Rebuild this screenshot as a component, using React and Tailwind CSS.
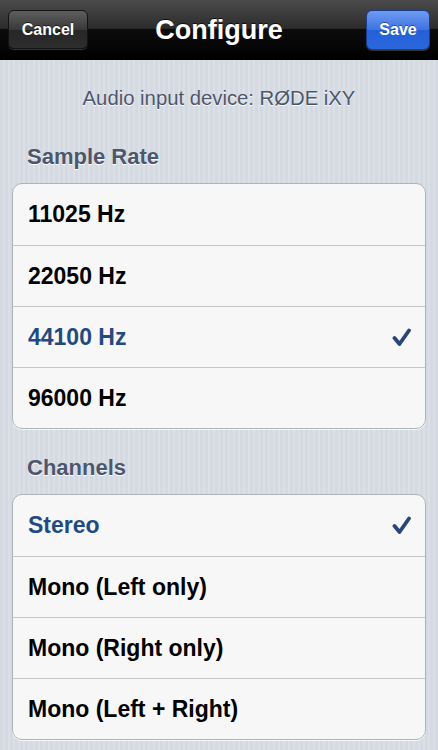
import { useState } from 'react';

const RATES = ['11025 Hz', '22050 Hz', '44100 Hz', '96000 Hz'];
const CHANNELS = ['Stereo', 'Mono (Left only)', 'Mono (Right only)', 'Mono (Left + Right)'];

function Check() {
  return (
    <svg width="19" height="19" viewBox="0 0 19 19" className="shrink-0">
      <path d="M2.5 10 L7.5 16 L17 2.5" fill="none" stroke="#2a4678" strokeWidth="3.8" strokeLinecap="round" strokeLinejoin="round" />
    </svg>
  );
}

function Group({ items, selected, onSelect }) {
  return (
    <div className="rounded-[10px] border border-[#aeb3ba] bg-[#f7f7f7] shadow-[0_1px_0_rgba(255,255,255,0.8)] overflow-hidden">
      {items.map((item, i) => (
        <div
          key={item}
          onClick={() => onSelect(i)}
          className={`flex h-[61px] items-center justify-between pl-[15px] pr-[14px] ${i > 0 ? 'border-t border-[#c6c6c6]' : ''}`}
        >
          <span className={`text-[23px] font-bold ${selected === i ? 'text-[#234a80]' : 'text-black'}`}>{item}</span>
          {selected === i && <Check />}
        </div>
      ))}
    </div>
  );
}

export default function App() {
  const [rate, setRate] = useState(2);
  const [channel, setChannel] = useState(0);

  return (
    <div className="h-[750px] w-[438px] overflow-hidden bg-[repeating-linear-gradient(90deg,#d5dae2_0px,#d5dae2_3px,#dbe0e7_3px,#dbe0e7_5px)] font-['Liberation_Sans',Arial,sans-serif]">
      <div className="relative flex h-[60px] items-center justify-between border-b border-black bg-[linear-gradient(to_bottom,#4b4b4b_0%,#2c2c2c_48%,#0c0c0c_50%,#000_100%)] px-[8px]">
        <button className="h-[39px] w-[80px] rounded-[6px] border border-[#141414] bg-[linear-gradient(to_bottom,#5e5e5e_0%,#3a3a3a_50%,#262626_51%,#2e2e2e_100%)] text-[16px] font-bold text-white shadow-[0_1px_0_rgba(255,255,255,0.18)] [text-shadow:0_-1px_0_rgba(0,0,0,0.6)]">
          Cancel
        </button>
        <h1 className="absolute left-0 right-0 top-[12px] text-center text-[27px] font-bold leading-[36px] text-white [text-shadow:0_-1px_0_rgba(0,0,0,0.7)] pointer-events-none">
          Configure
        </h1>
        <button className="h-[40px] w-[64px] rounded-[6px] border border-[#1b3c86] bg-[linear-gradient(to_bottom,#6e9cf2_0%,#3d72e0_50%,#2560d8_51%,#2a66dc_100%)] text-[16px] font-bold text-white shadow-[0_1px_0_rgba(255,255,255,0.18)] [text-shadow:0_-1px_0_rgba(0,0,0,0.4)]">
          Save
        </button>
      </div>

      <div className="px-[12px]">
        <p className="pt-[26px] text-center text-[20.3px] leading-[24px] text-[#4c566c] [text-shadow:0_1px_0_#fff]">
          Audio input device: RØDE iXY
        </p>

        <h2 className="mt-[35px] mb-[14px] pl-[15px] text-[22px] font-bold leading-[24px] text-[#4c566c] [text-shadow:0_1px_0_#fff]">
          Sample Rate
        </h2>
        <Group items={RATES} selected={rate} onSelect={setRate} />

        <h2 className="mt-[27px] mb-[14px] pl-[15px] text-[22px] font-bold leading-[24px] text-[#4c566c] [text-shadow:0_1px_0_#fff]">
          Channels
        </h2>
        <Group items={CHANNELS} selected={channel} onSelect={setChannel} />
      </div>
    </div>
  );
}
